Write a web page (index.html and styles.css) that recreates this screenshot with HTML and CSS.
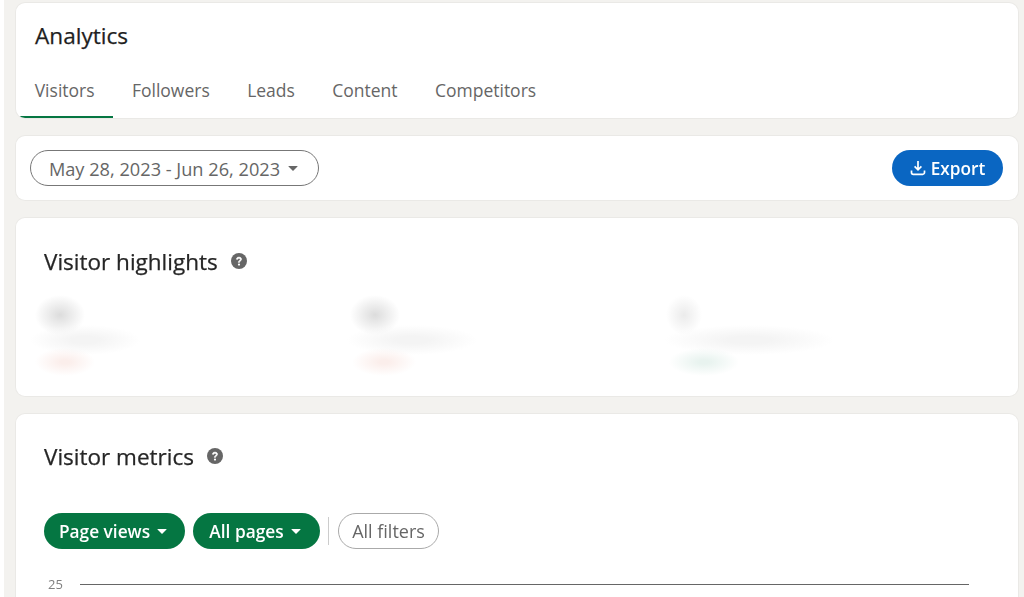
FILE: index.html
```html
<!DOCTYPE html>
<html lang="en">
<head>
  <meta charset="UTF-8" />
  <title>Analytics</title>
  <link rel="stylesheet" href="styles.css">
</head>
<body>
  <main class="page">
    <section class="card head-card">
      <h1>Analytics</h1>
      <nav class="tabs">
        <a class="tab active">Visitors</a>
        <a class="tab">Followers</a>
        <a class="tab">Leads</a>
        <a class="tab">Content</a>
        <a class="tab">Competitors</a>
      </nav>
    </section>

    <section class="card toolbar">
      <button class="date-btn">May 28, 2023 - Jun 26, 2023 <span class="caret"></span></button>
      <button class="export-btn">
        <svg width="16" height="16" viewBox="0 0 16 16" fill="none" stroke="#fff" stroke-width="1.7">
          <path d="M8 1v8.5M4.6 6.4 8 9.8l3.4-3.4M1.5 10.5v2a1.8 1.8 0 0 0 1.8 1.8h9.4a1.8 1.8 0 0 0 1.8-1.8v-2"/>
        </svg>
        Export
      </button>
    </section>

    <section class="card highlights">
      <h2>Visitor highlights
        <svg class="help" width="16" height="16" viewBox="0 0 16 16">
          <circle cx="8" cy="8" r="8" fill="#666"/>
          <path d="M5.4 6.3c0-1.5 1.1-2.2 2.6-2.2s2.6.8 2.6 2.1c0 1.8-2.1 1.8-2.1 3.2H7.3c0-2 2-2 2-3.1 0-.6-.5-.9-1.3-.9s-1.3.4-1.3 1z" fill="#fff" stroke="#fff" stroke-width=".5"/>
          <circle cx="8" cy="11.6" r="1.1" fill="#fff"/>
        </svg>
      </h2>
      <div class="stats">
        <div class="stat">
          <div class="smear num"></div>
          <div class="smear label"></div>
          <div class="smear delta red"></div>
        </div>
        <div class="stat">
          <div class="smear num"></div>
          <div class="smear label"></div>
          <div class="smear delta red"></div>
        </div>
        <div class="stat wide">
          <div class="smear num small"></div>
          <div class="smear label"></div>
          <div class="smear delta green"></div>
        </div>
      </div>
    </section>

    <section class="card metrics">
      <h2>Visitor metrics
        <svg class="help" width="16" height="16" viewBox="0 0 16 16">
          <circle cx="8" cy="8" r="8" fill="#666"/>
          <path d="M5.4 6.3c0-1.5 1.1-2.2 2.6-2.2s2.6.8 2.6 2.1c0 1.8-2.1 1.8-2.1 3.2H7.3c0-2 2-2 2-3.1 0-.6-.5-.9-1.3-.9s-1.3.4-1.3 1z" fill="#fff" stroke="#fff" stroke-width=".5"/>
          <circle cx="8" cy="11.6" r="1.1" fill="#fff"/>
        </svg>
      </h2>
      <div class="filters">
        <button class="pill green-pill">Page views <span class="caret white"></span></button>
        <button class="pill green-pill">All pages <span class="caret white"></span></button>
        <span class="divider"></span>
        <button class="pill plain-pill">All filters</button>
      </div>
      <div class="chart-row">
        <span class="tick">25</span>
        <span class="grid-line"></span>
      </div>
    </section>
  </main>
</body>
</html>
```

FILE: styles.css
```css
* {
  box-sizing: border-box;
}

html, body {
  height: 100%;
}

body {
  margin: 0;
  background: #fff;
  font-family: "Open Sans", "Noto Sans", sans-serif;
  color: #2b2b2b;
  overflow: hidden;
}

.page {
  margin-left: 4px;
  height: 597px;
  padding: 3px 6px 0 12px;
  background: #f3f2ef;
  display: flex;
  flex-direction: column;
  gap: 18px;
  filter: blur(0.4px);
}

.card {
  background: #fff;
  border-radius: 9px;
  box-shadow: 0 0 0 1px rgba(0,0,0,0.035);
}

button {
  font-family: inherit;
  cursor: pointer;
}

.head-card {
  height: 115px;
  flex: none;
  padding-top: 19px;
  display: flex;
  flex-direction: column;
  overflow: hidden;
}

h1 {
  margin: 0 0 0 19px;
  font-size: 22.6px;
  line-height: 28px;
  font-weight: 500;
  color: #1f1f1f;
  -webkit-text-stroke: 0.25px #1f1f1f;
}

.tabs {
  display: flex;
  margin-top: auto;
}

.tab {
  padding: 0 18.7px;
  height: 43px;
  line-height: 30px;
  font-size: 17.5px;
  color: #666;
  border-bottom: 2px solid transparent;
}

.tab.active {
  border-bottom-color: #057642;
}

.toolbar {
  height: 64px;
  flex: none;
  padding: 0 15px 0 14px;
  display: flex;
  align-items: center;
  justify-content: space-between;
}

.date-btn {
  height: 36px;
  width: 289px;
  background: #fff;
  border: 1px solid #777;
  border-radius: 18px;
  font-size: 18.2px;
  line-height: 36px;
  color: #666;
  display: flex;
  align-items: center;
  justify-content: center;
  gap: 8px;
  padding: 1px 2px 0 0;
}

.caret {
  display: inline-block;
  width: 0;
  height: 0;
  border-left: 5px solid transparent;
  border-right: 5px solid transparent;
  border-top: 5px solid #666;
  border-radius: 1px;
}

.caret.white {
  border-top-color: #fff;
}

.export-btn {
  width: 111px;
  height: 36px;
  background: #0a66c2;
  color: #fff;
  border: none;
  border-radius: 18px;
  font-size: 17.2px;
  font-weight: 600;
  display: flex;
  align-items: center;
  justify-content: center;
  gap: 5px;
  padding: 0;
}

h2 {
  margin: 0;
  font-size: 22.5px;
  line-height: 28px;
  font-weight: 500;
  color: #262626;
  -webkit-text-stroke: 0.25px #262626;
  display: flex;
  align-items: center;
  gap: 13px;
}

.help {
  position: relative;
  top: -1px;
}

.highlights {
  height: 178px;
  flex: none;
  padding: 30px 28px 0;
}

.stats {
  display: flex;
  margin-top: 19px;
}

.stat {
  width: 321px;
  display: flex;
  flex-direction: column;
}

/* the numbers are blurred out in the source, so just soft blobs */
.smear.num {
  width: 50px;
  height: 40px;
  margin-left: -9px;
  background: radial-gradient(closest-side, #dcdcdc, transparent);
}

.smear.num.small {
  width: 36px;
  background: radial-gradient(closest-side, #ebebeb, transparent);
}

.smear.label {
  width: 110px;
  height: 30px;
  margin: -10px 0 0 -14px;
  background: radial-gradient(closest-side, #f4f4f4 25%, transparent);
}

.stat:nth-child(2) .smear.label {
  width: 130px;
  margin-left: -12px;
}

.stat.wide .smear.label {
  width: 170px;
  margin-left: -11px;
}

.smear.delta {
  width: 60px;
  height: 28px;
  margin: -7px 0 0 -9px;
}

.smear.red {
  background: radial-gradient(closest-side, #fbeeeb 15%, transparent);
}

.stat:nth-child(2) .smear.delta {
  width: 64px;
  margin-left: -7px;
}

.smear.green {
  background: radial-gradient(closest-side, #e8f3ef 15%, transparent);
}

.stat.wide .smear.delta {
  width: 70px;
  margin-left: -6px;
}

.metrics {
  flex: 1;
  padding: 29px 28px 0;
  border-radius: 9px 9px 0 0;
  min-height: 0;
  overflow: hidden;
}

.filters {
  display: flex;
  align-items: center;
  gap: 8px;
  margin-top: 42px;
}

.pill {
  height: 36px;
  border-radius: 18px;
  font-size: 17.3px;
  padding: 0;
  display: flex;
  align-items: center;
  justify-content: center;
}

.green-pill {
  background: #057642;
  color: #fff;
  border: none;
  font-weight: 600;
  gap: 7px;
  width: 141px;
  padding-right: 3px;
}

.green-pill + .green-pill {
  width: 127px;
}

.divider {
  width: 1px;
  height: 28px;
  background: #ccc;
  margin-right: 1px;
}

.plain-pill {
  width: 101px;
  background: #fff;
  color: #666;
  border: 1px solid #aaa;
  font-size: 18px;
}

.chart-row {
  display: flex;
  align-items: center;
  gap: 17px;
  margin-top: 27px;
  padding-left: 4px;
}

.tick {
  font-size: 13px;
  color: #808080;
  line-height: 16px;
}

.grid-line {
  width: 889px;
  height: 1px;
  background: #666;
}
```
